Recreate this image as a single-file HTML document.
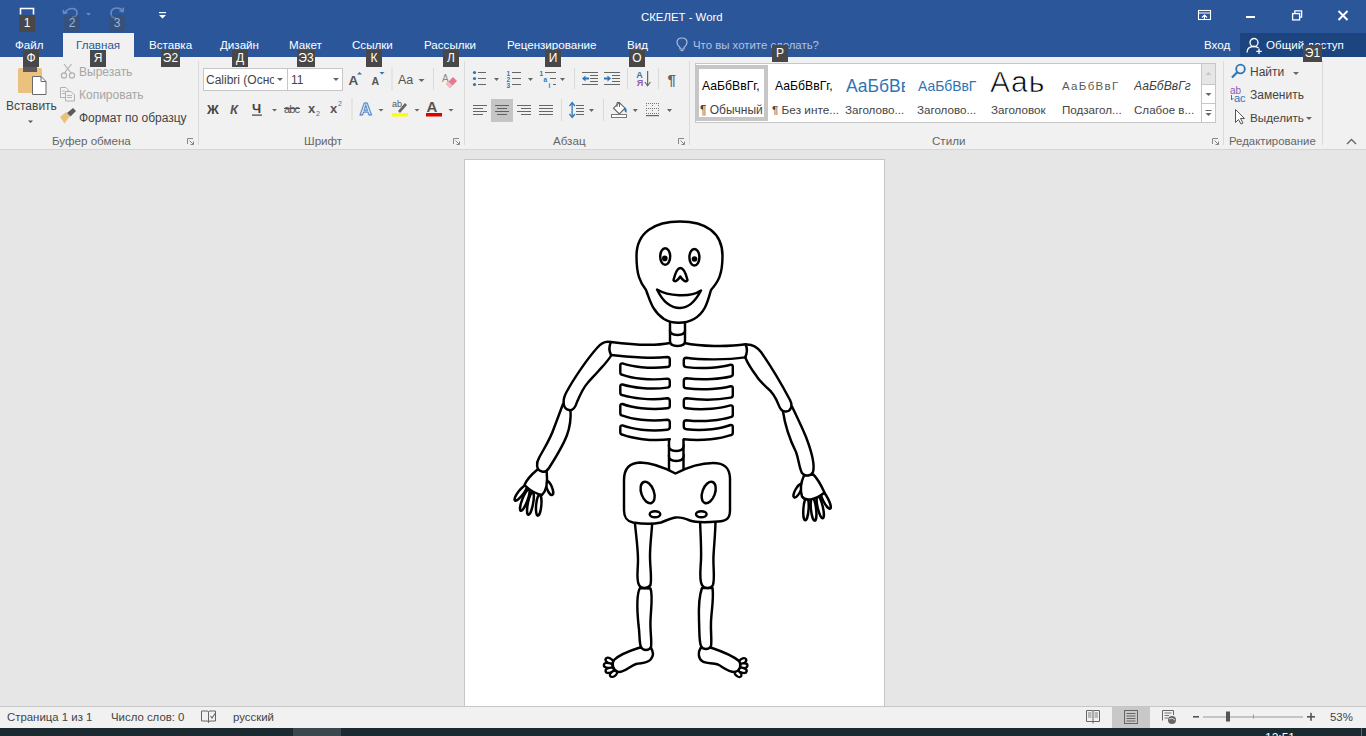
<!DOCTYPE html>
<html><head><meta charset="utf-8">
<style>
*{margin:0;padding:0;box-sizing:border-box}
html,body{width:1366px;height:736px;overflow:hidden}
body{position:relative;font-family:"Liberation Sans",sans-serif;background:#e6e6e6;color:#444}
.a{position:absolute;white-space:nowrap}
svg.a{overflow:visible}
.kt{position:absolute;background:#484848;color:#fff;font-size:12px;height:17px;line-height:17px;text-align:center}
.tab{position:absolute;top:38px;color:#fff;font-size:11.6px;line-height:14px}
.t{position:absolute;white-space:nowrap;font-size:12px;line-height:14px;color:#444}
.sep{position:absolute;width:1px;background:#dadada}
.gl{position:absolute;top:134px;font-size:11.6px;line-height:14px;color:#666;white-space:nowrap}
.dd{position:absolute;width:0;height:0;border-left:3px solid transparent;border-right:3px solid transparent;border-top:3px solid #666}
</style></head><body>
<!-- ===== title bar ===== -->
<div class="a" style="left:0;top:0;width:1366px;height:57px;background:#2b579a"></div>
<div class="t" style="left:641px;top:10px;color:#fff;font-size:11.4px">СКЕЛЕТ - Word</div>
<!--QAT-->
<svg class="a" style="left:0;top:0" width="200" height="32">
 <path d="M20.5 14.5 V8.5 H33.5 V14.5" fill="none" stroke="#fff" stroke-width="1.6"/>
 <path d="M64 13 Q68 8.5 72 8.5 Q77 8.5 77 13 Q77 17 72 17" fill="none" stroke="#6a8bbf" stroke-width="1.6"/>
 <path d="M63 10 L64 13.5 L67.5 12.5" fill="none" stroke="#6a8bbf" stroke-width="1.6"/>
 <path d="M86 13 H91 L88.5 15.5 Z" fill="#6a8bbf"/>
 <path d="M123 11 Q121 8 117 8 Q111 8 111 13.5 Q111 18 116 18" fill="none" stroke="#6a8bbf" stroke-width="1.6"/>
 <path d="M123.5 7.5 L123 11.5 L119.5 11" fill="none" stroke="#6a8bbf" stroke-width="1.6"/>
 <rect x="159" y="12" width="7" height="1.2" fill="#fff"/>
 <path d="M159 15 H166 L162.5 18.5 Z" fill="#fff"/>
</svg>
<div class="kt" style="left:19px;top:15px;width:16px">1</div>
<div class="kt" style="left:64px;top:15px;width:16px;background:rgba(72,72,72,.35);color:#9fb3d3">2</div>
<div class="kt" style="left:109px;top:15px;width:16px;background:rgba(72,72,72,.35);color:#9fb3d3">3</div>
<!-- window controls -->
<svg class="a" style="left:0;top:0" width="1366" height="32">
 <rect x="1198.5" y="10.5" width="12" height="9" fill="none" stroke="#fff" stroke-width="1.1"/>
 <rect x="1198" y="12.5" width="13" height="1" fill="#fff"/>
 <path d="M1202 17.5 L1204.5 15 L1207 17.5 M1204.5 15 V19.5" fill="none" stroke="#fff" stroke-width="1.1"/>
 <rect x="1246" y="16" width="9" height="2" fill="#fff"/>
 <rect x="1292.6" y="13.6" width="7" height="6.3" fill="none" stroke="#fff" stroke-width="1.3"/>
 <path d="M1294.8 13.6 V10.8 H1301.6 V17.2 H1299.6" fill="none" stroke="#fff" stroke-width="1.3"/>
 <path d="M1338.5 11 L1347.5 20 M1347.5 11 L1338.5 20" stroke="#fff" stroke-width="2"/>
</svg>
<!-- tabs -->
<div class="a" style="left:63px;top:33px;width:71px;height:24px;background:#f1f1f1"></div>
<div class="tab" style="left:15px">Файл</div>
<div class="tab" style="left:76px;color:#2b579a">Главная</div>
<div class="tab" style="left:149px">Вставка</div>
<div class="tab" style="left:220px">Дизайн</div>
<div class="tab" style="left:289px">Макет</div>
<div class="tab" style="left:352px">Ссылки</div>
<div class="tab" style="left:424px">Рассылки</div>
<div class="tab" style="left:507px">Рецензирование</div>
<div class="tab" style="left:627px">Вид</div>
<svg class="a" style="left:676px;top:37px" width="14" height="16">
 <path d="M4 10.5 Q1 8 1 5.5 Q1 1 6 1 Q11 1 11 5.5 Q11 8 8 10.5 V12 H4 Z" fill="none" stroke="#aebfdc" stroke-width="1.2"/>
 <path d="M4.5 13.5 H7.5" stroke="#aebfdc" stroke-width="1.2"/>
</svg>
<div class="tab" style="left:693px;color:#b4c3de;font-size:11.4px">Что вы хотите сделать?</div>
<div class="tab" style="left:1204px">Вход</div>
<div class="a" style="left:1240px;top:33px;width:126px;height:24px;background:#1c4580"></div>
<svg class="a" style="left:1246px;top:37px" width="18" height="18">
 <circle cx="8" cy="5.5" r="4" fill="none" stroke="#fff" stroke-width="1.3"/>
 <path d="M1 15.5 Q1 9.5 8 9.5 Q11 9.5 12.5 11" fill="none" stroke="#fff" stroke-width="1.3"/>
 <path d="M13 11.5 V17 M10.3 14.3 H15.7" stroke="#fff" stroke-width="1.3"/>
</svg>
<div class="tab" style="left:1266px">Общий доступ</div>
<!-- ===== ribbon ===== -->
<div class="a" style="left:0;top:57px;width:1366px;height:93px;background:#f1f1f1;border-bottom:1px solid #d5d5d5"></div>
<!-- clipboard group -->
<svg class="a" style="left:0;top:57px" width="200" height="92">
 <rect x="18" y="11" width="24" height="25" rx="1.5" fill="#eac27e"/>
 <rect x="23" y="10" width="14" height="5" fill="#5a5a5a"/>
 <path d="M32.5 19.5 H41 L46 24.5 V37.5 H32.5 Z" fill="#fff" stroke="#6a6a6a" stroke-width="1"/>
 <path d="M41 19.5 V24.5 H46" fill="none" stroke="#6a6a6a" stroke-width="1"/>
 <path d="M28 63.5 H33 L30.5 66 Z" fill="#555"/>
 <!-- scissors -->
 <path d="M64 7 L71.5 16.5 M71.5 7 L64 16.5" stroke="#b0b0b0" stroke-width="1.2"/>
 <circle cx="64" cy="18.5" r="2.6" fill="none" stroke="#b0b0b0" stroke-width="1.2"/>
 <circle cx="72" cy="18.5" r="2.6" fill="none" stroke="#b0b0b0" stroke-width="1.2"/>
 <!-- copy -->
 <path d="M60.5 30.5 H66 L68 32.5 V40.5 H60.5 Z" fill="none" stroke="#b0b0b0" stroke-width="1"/>
 <path d="M65.5 34.5 H71 L74.5 38 V44 H65.5 Z" fill="#f1f1f1" stroke="#b0b0b0" stroke-width="1"/>
 <path d="M62 34 H65 M62 36.5 H65 M67 38.5 H72 M67 40.5 H72" stroke="#b0b0b0" stroke-width="0.9"/>
 <!-- format painter -->
 <path d="M60 60 L66 55 L70 59 L64.5 66.5 Z" fill="#eac27e"/>
 <path d="M67 56 L73 51 L76 54 L70.5 59.5 Z" fill="#5a5a5a"/>
 <!-- launcher -->
 <path d="M187.5 87 V81.5 H193" fill="none" stroke="#888" stroke-width="1"/>
 <path d="M189.5 83.5 L193.5 87.5 M193.5 84.5 V87.5 H190.5" fill="none" stroke="#888" stroke-width="1"/>
</svg>
<div class="t" style="left:6px;top:99px;font-size:12px">Вставить</div>
<div class="t" style="left:79px;top:65px;color:#a6a6a6">Вырезать</div>
<div class="t" style="left:79px;top:88px;color:#a6a6a6">Копировать</div>
<div class="t" style="left:79px;top:111px">Формат по образцу</div>
<div class="gl" style="left:52px">Буфер обмена</div>
<div class="sep" style="left:198px;top:61px;height:84px"></div>

<!-- font group -->
<div class="a" style="left:203px;top:68px;width:85px;height:23px;background:#fff;border:1px solid #c6c6c6"></div>
<div class="a" style="left:287px;top:68px;width:56px;height:23px;background:#fff;border:1px solid #c6c6c6"></div>
<div class="t" style="left:206px;top:73px;width:68px;overflow:hidden;font-size:12px">Calibri (Основной текст)</div>
<div class="t" style="left:291px;top:73px">11</div>
<div class="dd" style="left:277px;top:78px"></div>
<div class="dd" style="left:333px;top:78px"></div>
<svg class="a" style="left:199px;top:57px" width="270" height="92">
 <!-- grow/shrink -->
 <text x="149.5" y="28" font-family="Liberation Sans" font-size="13.5" font-weight="bold" fill="#555">A</text>
 <path d="M158 17.5 L160.5 15 L163 17.5 Z" fill="#2e75b6"/>
 <text x="172.5" y="28" font-family="Liberation Sans" font-size="10.5" font-weight="bold" fill="#555">A</text>
 <path d="M180.5 15 H185.5 L183 17.5 Z" fill="#2e75b6"/>
 <rect x="192.5" y="11" width="1" height="22" fill="#dadada"/>
 <text x="199" y="27" font-family="Liberation Sans" font-size="12.5" fill="#555">Aa</text>
 <path d="M219.5 22 H225.5 L222.5 25 Z" fill="#666"/>
 <rect x="234" y="11" width="1" height="22" fill="#dadada"/>
 <!-- clear formatting -->
 <text x="243" y="25" font-family="Liberation Sans" font-size="10" fill="#888">A</text>
 <path d="M247 27 L254 20 L258 24 L251 31 Z" fill="#e8788a"/>
 <path d="M247 27 L249.5 24.5 L253.5 28.5 L251 31 Z" fill="#f4b9c2"/>
 <g transform="translate(0,-1)"><!-- row2 -->
 <text x="8" y="58" font-family="Liberation Sans" font-size="13" font-weight="bold" fill="#444">Ж</text>
 <text x="31" y="58" font-family="Liberation Sans" font-size="13" font-style="italic" font-weight="bold" fill="#555">К</text>
 <text x="53" y="57" font-family="Liberation Sans" font-size="13" font-weight="bold" fill="#444">Ч</text>
 <rect x="53" y="58.5" width="10" height="1.2" fill="#444"/>
 <path d="M73 53 H78 L75.5 55.5 Z" fill="#666"/>
 <text x="85" y="57" font-family="Liberation Sans" font-size="11" fill="#555" textLength="16">abc</text>
 <rect x="85" y="52" width="16" height="1" fill="#555"/>
 <text x="109" y="57" font-family="Liberation Sans" font-size="13" font-weight="bold" fill="#555">x</text>
 <text x="117" y="60" font-family="Liberation Sans" font-size="7" fill="#2e75b6">2</text>
 <text x="131" y="57" font-family="Liberation Sans" font-size="13" font-weight="bold" fill="#555">x</text>
 <text x="139" y="50" font-family="Liberation Sans" font-size="7" fill="#2e75b6">2</text>
 <rect x="152.5" y="42" width="1" height="22" fill="#dadada"/>
 <text x="160.5" y="59" font-family="Liberation Sans" font-size="17" font-weight="bold" fill="#fff" stroke="#3f7fc0" stroke-width="1">A</text>
 <path d="M179.5 53 H184.5 L182 55.5 Z" fill="#666"/>
 <text x="193" y="51" font-family="Liberation Sans" font-size="9" fill="#555">ab</text>
 <path d="M199 55 L206 47 L208 49 L201 57 Z" fill="#666"/>
 <rect x="193" y="57" width="16" height="3.5" fill="#ffff00"/>
 <path d="M215.5 53 H220.5 L218 55.5 Z" fill="#666"/>
 <text x="227.5" y="56" font-family="Liberation Sans" font-size="15" font-weight="bold" fill="#555">A</text>
 <rect x="227" y="57" width="16" height="3.5" fill="#e00000"/>
 <path d="M249.5 53 H254.5 L252 55.5 Z" fill="#666"/>
 </g>
 <!-- launcher -->
 <path d="M254.5 87 V81.5 H260" fill="none" stroke="#888" stroke-width="1"/>
 <path d="M256.5 83.5 L260.5 87.5 M260.5 84.5 V87.5 H257.5" fill="none" stroke="#888" stroke-width="1"/>
</svg>
<div class="gl" style="left:304px">Шрифт</div>
<div class="sep" style="left:464px;top:61px;height:84px"></div>

<!-- paragraph group -->
<svg class="a" style="left:0;top:0" width="700" height="150">
 <g fill="#2e75b6"><circle cx="474.5" cy="72.5" r="1.6"/><circle cx="474.5" cy="78.5" r="1.6"/><circle cx="474.5" cy="84.5" r="1.6"/></g>
 <g fill="#666">
  <rect x="478" y="72" width="8" height="1"/><rect x="478" y="78" width="8" height="1"/><rect x="478" y="84" width="8" height="1"/>
  <path d="M494 78 H499 L496.5 81 Z"/>
  <rect x="512" y="72" width="9" height="1"/><rect x="512" y="78" width="9" height="1"/><rect x="512" y="84" width="9" height="1"/>
  <path d="M528 78 H533 L530.5 81 Z"/>
  <rect x="545" y="72" width="11" height="1"/><rect x="550" y="78" width="6" height="1"/><rect x="553" y="84" width="3" height="1"/>
  <path d="M560 78 H565 L562.5 81 Z"/>
 </g>
 <g font-family="Liberation Sans" font-size="6.5" font-weight="bold" fill="#2e75b6"><text x="506.5" y="75.5">1</text><text x="506.5" y="81.5">2</text><text x="506.5" y="87.5">3</text><text x="539.5" y="75.5">1</text><text x="543.5" y="81.5">a</text><text x="548.5" y="87.5">i</text></g>
 <rect x="574" y="68" width="1" height="21" fill="#dadada"/>
 <g fill="#666">
  <rect x="582" y="72" width="16" height="1"/><rect x="590" y="75" width="8" height="1"/><rect x="590" y="78" width="8" height="1"/><rect x="590" y="81" width="8" height="1"/><rect x="582" y="84" width="16" height="1"/>
  <rect x="604" y="72" width="16" height="1"/><rect x="612" y="75" width="8" height="1"/><rect x="612" y="78" width="8" height="1"/><rect x="612" y="81" width="8" height="1"/><rect x="604" y="84" width="16" height="1"/>
 </g>
 <path d="M582 78.5 L585.5 75.5 V81.5 Z" fill="#2e75b6"/><rect x="585" y="77.5" width="4" height="2" fill="#2e75b6"/>
 <path d="M611 78.5 L607.5 75.5 V81.5 Z" fill="#2e75b6"/><rect x="604" y="77.5" width="4" height="2" fill="#2e75b6"/>
 <rect x="627" y="68" width="1" height="21" fill="#dadada"/>
 <text x="636.3" y="77.8" font-family="Liberation Sans" font-size="9" font-weight="bold" fill="#2e75b6">A</text>
 <text x="636.8" y="86" font-family="Liberation Sans" font-size="9" font-weight="bold" fill="#8f5ab3">Я</text>
 <rect x="647" y="71" width="1.2" height="14" fill="#666"/>
 <path d="M644.8 82 L647.6 85.8 L650.4 82" fill="none" stroke="#666" stroke-width="1.1"/>
 <rect x="658" y="68" width="1" height="21" fill="#dadada"/>
 <text x="667.5" y="85" font-family="Liberation Sans" font-size="15" font-weight="bold" fill="#666">¶</text>
 <!-- row2 -->
 <g fill="#666">
  <rect x="473" y="105" width="14" height="1"/><rect x="473" y="108" width="10" height="1"/><rect x="473" y="111" width="14" height="1"/><rect x="473" y="114" width="10" height="1"/>
 </g>
 <rect x="491" y="99" width="22" height="23" fill="#c5c5c5"/>
 <g fill="#606060">
  <rect x="495" y="105" width="14" height="1"/><rect x="497" y="108" width="10" height="1"/><rect x="495" y="111" width="14" height="1"/><rect x="497" y="114" width="10" height="1"/>
 </g>
 <g fill="#666">
  <rect x="517" y="105" width="14" height="1"/><rect x="521" y="108" width="10" height="1"/><rect x="517" y="111" width="14" height="1"/><rect x="521" y="114" width="10" height="1"/>
  <rect x="539" y="105" width="14" height="1"/><rect x="539" y="108" width="14" height="1"/><rect x="539" y="111" width="14" height="1"/><rect x="539" y="114" width="14" height="1"/>
 </g>
 <rect x="561" y="99" width="1" height="22" fill="#dadada"/>
 <rect x="571.5" y="104" width="1.3" height="12" fill="#2e75b6"/>
 <path d="M569.5 106 L572.2 102.5 L574.9 106 M569.5 114 L572.2 117.5 L574.9 114" fill="none" stroke="#2e75b6" stroke-width="1.3"/>
 <g fill="#666"><rect x="576" y="105" width="8" height="1"/><rect x="576" y="108" width="8" height="1"/><rect x="576" y="111" width="8" height="1"/><rect x="576" y="114" width="8" height="1"/>
  <path d="M589 109 H594 L591.5 112 Z"/></g>
 <rect x="603" y="99" width="1" height="22" fill="#dadada"/>
 <path d="M613.5 108.2 L619.3 102.5 L625 108.2 L619.3 114 Z" fill="#fff" stroke="#666" stroke-width="1.1"/>
 <path d="M617 107 V102.5 H619.5 V107" fill="none" stroke="#666" stroke-width="1"/>
 <path d="M624 107 Q627.5 108 626.5 113 L624.5 111 Z" fill="#2e75b6"/>
 <rect x="611.5" y="114.5" width="15" height="3" fill="#fff" stroke="#777" stroke-width="1"/>
 <path d="M632.8 109 H637.8 L635.3 112 Z" fill="#666"/>
 <g fill="#777">
  <rect x="646" y="103" width="1" height="1"/><rect x="648" y="103" width="1" height="1"/><rect x="650" y="103" width="1" height="1"/><rect x="652" y="103" width="1" height="1"/><rect x="654" y="103" width="1" height="1"/><rect x="656" y="103" width="1" height="1"/><rect x="658" y="103" width="1" height="1"/>
  <rect x="646" y="108" width="1" height="1"/><rect x="648" y="108" width="1" height="1"/><rect x="650" y="108" width="1" height="1"/><rect x="652" y="108" width="1" height="1"/><rect x="654" y="108" width="1" height="1"/><rect x="656" y="108" width="1" height="1"/><rect x="658" y="108" width="1" height="1"/>
  <rect x="646" y="113" width="1" height="1"/><rect x="652" y="113" width="1" height="1"/><rect x="658" y="113" width="1" height="1"/>
  <rect x="646" y="105" width="1" height="1"/><rect x="646" y="110" width="1" height="1"/><rect x="652" y="105" width="1" height="1"/><rect x="652" y="110" width="1" height="1"/><rect x="658" y="105" width="1" height="1"/><rect x="658" y="110" width="1" height="1"/>
  <rect x="648" y="113" width="1" height="1"/><rect x="650" y="113" width="1" height="1"/><rect x="654" y="113" width="1" height="1"/><rect x="656" y="113" width="1" height="1"/>
 </g>
 <rect x="646" y="115" width="13" height="1.2" fill="#666"/>
 <path d="M667 109 H672 L669.5 112 Z" fill="#666"/>
 <!-- launcher -->
 <path d="M678.5 144 V138.5 H684" fill="none" stroke="#888" stroke-width="1"/>
 <path d="M680.5 140.5 L684.5 144.5 M684.5 141.5 V144.5 H681.5" fill="none" stroke="#888" stroke-width="1"/>
</svg>
<div class="gl" style="left:553px">Абзац</div>
<div class="sep" style="left:689px;top:61px;height:84px"></div>

<!-- styles group -->
<div class="a" style="left:695px;top:63px;width:521px;height:60px;background:#fff;border:1px solid #c6c6c6"></div>
<div class="a" style="left:695px;top:65px;width:73px;height:56px;border:4px solid #c6c6c6;background:#fff"></div>
<div class="t" style="left:702px;top:79px;color:#000;font-size:12.2px">АаБбВвГг,</div>
<div class="t" style="left:700px;top:103px;color:#444;font-size:12px">¶ Обычный</div>
<div class="t" style="left:775px;top:79px;color:#000;font-size:12.2px">АаБбВвГг,</div>
<div class="t" style="left:772px;top:103px;color:#444;font-size:11.8px">¶ Без инте...</div>
<div class="t" style="left:846px;top:76px;width:59px;overflow:hidden;color:#2e74b5;font-size:17.5px;line-height:20px">АаБбВв</div>
<div class="t" style="left:845px;top:103px;color:#444;font-size:11.6px">Заголово...</div>
<div class="t" style="left:918px;top:78px;color:#2e74b5;font-size:13.9px;line-height:16px">АаБбВвГ</div>
<div class="t" style="left:917px;top:103px;color:#444;font-size:11.6px">Заголово...</div>
<svg class="a" style="left:985px;top:62px" width="70" height="36"><text x="5" y="29.5" font-family="Liberation Sans" font-size="30" letter-spacing="1" fill="#000" stroke="#fff" stroke-width="0.7">Aaь</text></svg>
<div class="t" style="left:991px;top:103px;color:#444;font-size:11.6px">Заголовок</div>
<div class="t" style="left:1062px;top:79px;color:#5a5a5a;font-size:11.5px;letter-spacing:1.3px">АаБбВвГ</div>
<div class="t" style="left:1062px;top:103px;color:#444;font-size:11.6px">Подзагол...</div>
<div class="t" style="left:1134px;top:79px;width:60px;overflow:hidden;color:#404040;font-size:12.2px;font-style:italic">АаБбВвГг</div>
<div class="t" style="left:1134px;top:103px;color:#444;font-size:11.6px">Слабое в...</div>
<div class="a" style="left:1201px;top:63px;width:15px;height:60px;background:#fff;border:1px solid #c6c6c6"></div>
<div class="a" style="left:1202px;top:64px;width:13px;height:21px;background:#e6e6e6"></div>
<div class="a" style="left:1201px;top:84px;width:15px;height:1px;background:#c6c6c6"></div>
<div class="a" style="left:1201px;top:103px;width:15px;height:1px;background:#c6c6c6"></div>
<svg class="a" style="left:1201px;top:63px" width="15" height="60">
 <path d="M4.5 12 H10.5 L7.5 9 Z" fill="#c6c6c6"/>
 <path d="M4.5 30 H10.5 L7.5 33 Z" fill="#666"/>
 <path d="M4.5 47.5 H10.5" stroke="#666" stroke-width="1"/>
 <path d="M4.5 50 H10.5 L7.5 53 Z" fill="#666"/>
</svg>
<div class="gl" style="left:932px">Стили</div>
<svg class="a" style="left:1205px;top:57px" width="20" height="92">
 <path d="M7.5 87 V81.5 H13" fill="none" stroke="#888" stroke-width="1"/>
 <path d="M9.5 83.5 L13.5 87.5 M13.5 84.5 V87.5 H10.5" fill="none" stroke="#888" stroke-width="1"/>
</svg>
<div class="sep" style="left:1223px;top:61px;height:84px"></div>

<!-- editing group -->
<svg class="a" style="left:1225px;top:57px" width="141" height="92">
 <circle cx="15.5" cy="12" r="4.3" fill="none" stroke="#2e75b6" stroke-width="1.8"/>
 <path d="M12.5 15 L7 20.5" stroke="#2e75b6" stroke-width="2.2"/>
 <path d="M68 15 H74 L71 18 Z" fill="#666"/>
 <text x="5" y="37" font-family="Liberation Sans" font-size="10" fill="#8f5ab3">ab</text>
 <text x="9" y="45" font-family="Liberation Sans" font-size="11" fill="#2e75b6">ac</text>
 <path d="M6.5 38 V43 L8.5 41" fill="none" stroke="#2e75b6" stroke-width="1"/>
 <path d="M10.5 52.5 V65.5 L13.5 62.5 L16 67 L18 66 L15.5 61.5 L19.5 61.5 Z" fill="#fff" stroke="#555" stroke-width="1"/>
 <path d="M81 60 H87 L84 63 Z" fill="#666"/>
 <path d="M122 87 L126.5 82.5 L131 87" fill="none" stroke="#666" stroke-width="1.4"/>
</svg>
<div class="t" style="left:1250px;top:65px">Найти</div>
<div class="t" style="left:1250px;top:88px">Заменить</div>
<div class="t" style="left:1250px;top:111px;font-size:11.7px">Выделить</div>
<div class="gl" style="left:1229px;font-size:11.4px">Редактирование</div>
<div class="sep" style="left:1322px;top:61px;height:84px"></div>

<!-- tab keytips -->
<div class="kt" style="left:23px;top:50px;width:16px">Ф</div>
<div class="kt" style="left:90px;top:50px;width:16px">Я</div>
<div class="kt" style="left:161px;top:50px;width:19px">Э2</div>
<div class="kt" style="left:232px;top:50px;width:16px">Д</div>
<div class="kt" style="left:297px;top:50px;width:18px">Э3</div>
<div class="kt" style="left:366px;top:50px;width:16px">К</div>
<div class="kt" style="left:443px;top:50px;width:16px">Л</div>
<div class="kt" style="left:545px;top:50px;width:16px">И</div>
<div class="kt" style="left:629px;top:50px;width:16px">О</div>
<div class="kt" style="left:772px;top:45px;width:16px">Р</div>
<div class="kt" style="left:1303px;top:45px;width:19px">Э1</div>
<!-- ===== document ===== -->
<div class="a" style="left:464px;top:159px;width:421px;height:560px;background:#fff;border:1px solid #c6c6c6"></div>
<svg class="a" style="left:0;top:0" width="1366" height="736" viewBox="0 0 1366 736"><g stroke="#000" stroke-width="2.45" stroke-linejoin="round" stroke-linecap="round"><ellipse cx="520.78" cy="492.95" rx="2.6" ry="9.5" transform="rotate(38 520.78 492.95)" fill="#fff"/><ellipse cx="524.81" cy="500.1" rx="2.6" ry="11.5" transform="rotate(21 524.81 500.1)" fill="#fff"/><ellipse cx="530.45" cy="503.59" rx="2.6" ry="11.5" transform="rotate(11 530.45 503.59)" fill="#fff"/><ellipse cx="538.73" cy="505.2" rx="2.6" ry="10.5" transform="rotate(5 538.73 505.2)" fill="#fff"/><ellipse cx="549.48" cy="487.99" rx="2.6" ry="7.5" transform="rotate(-22 549.48 487.99)" fill="#fff"/><path d="M 537.5 469.5 C 532 474 527 479 524.5 485 C 529 489.5 535 493.5 542 495 C 546 491 548 484 546.7 471.8 Z" fill="#fff"/><path d="M 563 404 C 560 412 557 420 554 428 C 550 440 543 450 539 458 C 536 463 536 470 542 471.5 C 545 472.5 547 471 549 468 C 556 457 563 446 567 435 C 570 427 571 417 570.5 409.5 Z" fill="#fff"/><path d="M 610.5 342 C 606 341 601 343 597 348 C 588 358 574 378 566 393 C 562 401 563 409 569 410 C 573 411 575.5 407 577 402 C 580 395 583 388 587.6 383 C 591 379 595 375 598.5 371 C 603 366 608 361 611.5 355 Z" fill="#fff"/><ellipse cx="806.0" cy="508.88" rx="2.6" ry="11.5" transform="rotate(4 806.0 508.88)" fill="#fff"/><ellipse cx="813.56" cy="509.32" rx="2.6" ry="11.5" transform="rotate(-6 813.56 509.32)" fill="#fff"/><ellipse cx="820.21" cy="507.08" rx="2.6" ry="11.5" transform="rotate(-13 820.21 507.08)" fill="#fff"/><ellipse cx="825.65" cy="499.79" rx="2.6" ry="10" transform="rotate(-27 825.65 499.79)" fill="#fff"/><ellipse cx="797.79" cy="490.76" rx="2.6" ry="7.5" transform="rotate(29 797.79 490.76)" fill="#fff"/><path d="M 804 475.5 C 801 482 800 490 802 496.5 C 805 501.5 815 500.5 824.5 492.5 C 821 485 817 478 813.3 474.5 Z" fill="#fff"/><path d="M 783 411.5 C 785 425 790 440 796 452 C 799 460 799 468 802 473 C 805 477 811 476 813 472 C 815 465 811 450 806 437 C 801 425 796 415 792 406.5 Z" fill="#fff"/><path d="M 746 344.5 C 752 344 757 347 761 352 C 770 365 782 385 790 400 C 793 406 791 411 786 411.5 C 782 412 780 409 778.5 404.6 C 775 396 771 391 767.6 388.3 C 763 384 759 380 756.7 376.3 C 752 370 748 364 745.5 358 Z" fill="#fff"/><ellipse cx="609.5" cy="660.8" rx="4.3" ry="2.5" transform="rotate(30 609.5 660.8)" fill="#fff" stroke-width="2.3"/><ellipse cx="608.3" cy="665.5" rx="4.5" ry="2.5" transform="rotate(8 608.3 665.5)" fill="#fff" stroke-width="2.3"/><ellipse cx="609.8" cy="670.3" rx="4.3" ry="2.5" transform="rotate(-12 609.8 670.3)" fill="#fff" stroke-width="2.3"/><ellipse cx="613.5" cy="673.8" rx="4.0" ry="2.5" transform="rotate(-35 613.5 673.8)" fill="#fff" stroke-width="2.3"/><path d="M 640 647.5 C 632 650 620 654 614 660 C 611 664 613 670 618 672 C 624 673 630 666 636 664 C 642 662.5 647 664 651 659 C 654 655 653 651 651 648 Z" fill="#fff"/><path d="M 640 588 C 636 595 637 610 638.5 625 C 640 635 639 643 641 647 C 643 651 649 651 651 647 C 652 640 650 632 650.5 620 C 651 608 653 595 650.5 588.5 Z" fill="#fff"/><path d="M 634.5 519 C 636 535 638 548 638 560 C 638 570 636 580 639 585 C 641 589 648 589 650.5 585 C 652 578 650 568 650 556 C 650 545 651.5 535 652.5 519 Z" fill="#fff"/><ellipse cx="742.3" cy="661.3" rx="4.3" ry="2.5" transform="rotate(-30 742.3 661.3)" fill="#fff" stroke-width="2.3"/><ellipse cx="743.0" cy="665.8" rx="4.5" ry="2.5" transform="rotate(-5 743.0 665.8)" fill="#fff" stroke-width="2.3"/><ellipse cx="742.5" cy="670.3" rx="4.3" ry="2.5" transform="rotate(15 742.5 670.3)" fill="#fff" stroke-width="2.3"/><ellipse cx="738.0" cy="673.8" rx="4.0" ry="2.5" transform="rotate(40 738.0 673.8)" fill="#fff" stroke-width="2.3"/><path d="M 710.6 647.5 C 718 650 732 655 739 661 C 742 665 740 671 734.5 672 C 728 672 723 667 718 664.5 C 712 662.5 706 664 702 661 C 698 658 698 652 700.6 648 Z" fill="#fff"/><path d="M 702 588 C 699 596 698.5 606 699 620 C 699.5 632 699 642 701 646 C 703 650 709 650 711 646 C 712 640 710.5 632 711 622 C 711.5 610 714 598 712.5 588 Z" fill="#fff"/><path d="M 700 519 C 700.5 535 701.5 548 701 560 C 700.5 570 699 580 702 585 C 704 589 711 589 713 585 C 715 578 713 568 713.5 556 C 714 545 715.5 533 715.5 519 Z" fill="#fff"/><path d="M 669 455 L 669 475 L 683.5 475 L 683.5 455" fill="#fff"/><path d="M 669 445 L 669 456 C 669 460 672 461 676.2 461 C 680.5 461 683.5 460 683.5 456 L 683.5 445" fill="#fff"/><path d="M 669 440 L 669 446 C 669 450 672 451 676.2 451 C 680.5 451 683.5 450 683.5 446 L 683.5 440" fill="#fff"/><path d="M 624 480 C 624 472 627 463 640 462.5 C 652 462.5 665 468 675.5 473.5 C 686 468 700 463 713 463 C 725 463 729.5 468 730 478 L 730 510 C 730 518 727 521 718 521.5 C 706 522.5 697 523 690 520.5 C 684 518 679 517 675.5 517.5 C 672 518 667 520 661 522.5 C 654 524 643 524 633 522.5 C 626 521 624 517 624 510 Z" fill="#fff"/><ellipse cx="647.6" cy="492.5" rx="6.3" ry="11.2" transform="rotate(-20 647.6 492.5)" fill="#fff"/><ellipse cx="708.7" cy="492.5" rx="6.3" ry="11.2" transform="rotate(20 708.7 492.5)" fill="#fff"/><ellipse cx="655" cy="514.2" rx="5.3" ry="3.0" transform="rotate(0 655 514.2)" fill="#fff"/><ellipse cx="701.3" cy="514.2" rx="5.3" ry="3.0" transform="rotate(0 701.3 514.2)" fill="#fff"/><path d="M 611 342 C 630 344.5 655 346 670 343 L 684.5 343 C 700 346.5 728 347 745.6 344.3 C 747.5 349 747 354 745 357.4 L 684 357.7 L 684 367 L 670 367 L 670 357 L 611 355 C 609 351 609 346 611 342 Z" fill="#fff" stroke="none"/><path d="M 611 355 C 609 351 609 346 611 342 C 630 344.5 655 346 670 343 L 684.5 343 C 700 346.5 728 347 745.6 344.3 C 747.5 349 747 354 745 357.4" fill="none"/><path d="M 670 330 L 670 341 C 670 345 673 346 677.5 346 C 682 346 685 345 685 341 L 685 330" fill="#fff"/><path d="M 670 318 L 670 330 C 670 334 673 335 677.5 335 C 682 335 685 334 685 330 L 685 318" fill="#fff"/><path d="M 611 355 C 630 357.5 655 358.5 667.1999999999999 357 Q 669.8 357 669.8 359.6 L 669.8 364.4 Q 669.8 367 667.1999999999999 367 C 649.32 369.20 631.44 366.50 622.50 363.40 Q 620.3 363.09999999999997 620.3 365.59999999999997 L 620.3 372.40000000000003 Q 620.3 374.6 622.5 374.8 C 631.44 378.00 649.32 380.80 667.20 378.60 Q 669.8 378.6 669.8 381.20000000000005 L 669.8 385.0 Q 669.8 387.6 667.1999999999999 387.6 C 649.32 389.80 631.44 387.35 622.50 384.50 Q 620.3 384.2 620.3 386.7 L 620.3 392.8 Q 620.3 395 622.5 395.2 C 631.44 398.05 649.32 400.50 667.20 398.30 Q 669.8 398.3 669.8 400.90000000000003 L 669.8 405.7 Q 669.8 408.3 667.1999999999999 408.3 C 649.32 410.50 631.44 407.45 622.50 404.00 Q 620.3 403.7 620.3 406.2 L 620.3 413.2 Q 620.3 415.4 622.5 415.59999999999997 C 631.44 418.95 649.32 421.90 667.20 419.70 Q 669.8 419.7 669.8 422.3 L 669.8 427.09999999999997 Q 669.8 429.7 667.1999999999999 429.7 C 649.32 431.90 631.44 428.85 622.50 425.40 Q 620.3 425.09999999999997 620.3 427.59999999999997 L 620.3 432.3 Q 620.3 434.5 622.5 434.7 C 631.96 438.30 650.88 441.50 669.80 439.30" fill="none"/><path d="M 745 357.4 C 728 360 700 360 686.4 357.7 Q 683.8 357.7 683.8 360.3 L 683.8 364.5 Q 683.8 367.1 686.4 367.1 C 704.08 369.30 721.76 367.25 730.60 364.80 Q 732.8 364.5 732.8 367.0 L 732.8 374.1 Q 732.8 376.3 730.5999999999999 376.5 C 721.76 378.70 704.08 380.50 686.40 378.30 Q 683.8 378.3 683.8 380.90000000000003 L 683.8 385.7 Q 683.8 388.3 686.4 388.3 C 704.08 390.50 721.76 388.55 730.60 386.20 Q 732.8 385.9 732.8 388.4 L 732.8 395.2 Q 732.8 397.4 730.5999999999999 397.59999999999997 C 721.76 399.25 704.08 400.50 686.40 398.30 Q 683.8 398.3 683.8 400.90000000000003 L 683.8 405.7 Q 683.8 408.3 686.4 408.3 C 704.08 410.50 721.76 408.15 730.60 405.40 Q 732.8 405.09999999999997 732.8 407.59999999999997 L 732.8 414.7 Q 732.8 416.9 730.5999999999999 417.09999999999997 C 721.76 419.95 704.08 422.40 686.40 420.20 Q 683.8 420.2 683.8 422.8 L 683.8 426.59999999999997 Q 683.8 429.2 686.4 429.2 C 704.08 431.40 721.76 428.40 730.60 425.00 Q 732.8 424.7 732.8 427.2 L 732.8 432.8 Q 732.8 435 730.5999999999999 435.2 C 721.24 438.55 702.52 441.50 683.80 439.30" fill="none"/><path d="M 680 221.5 C 705 221.5 722.5 232 722.5 256 C 722.5 275 718 282 711 290 C 708 300 706 312 694 319 C 685 324 672 324 664 319 C 652 311 650 300 646 290 C 640 282 636.5 275 636.5 256 C 636.5 232 655 221.5 680 221.5 Z" fill="#fff"/><ellipse cx="665.2" cy="256.5" rx="5" ry="8.3" transform="rotate(0 665.2 256.5)" fill="#fff"/><ellipse cx="694.4" cy="257.2" rx="5" ry="8.3" transform="rotate(0 694.4 257.2)" fill="#fff"/><circle cx="664.8" cy="258.4" r="2.8" fill="#000" stroke="none"/><circle cx="694.5" cy="259" r="2.8" fill="#000" stroke="none"/><path d="M 673.5 280 C 675 274 677 268 680.3 268 C 683.5 268 686 274 687.5 280 C 686 282.5 683 281 680.3 276.5 C 677.5 281 674.5 282.5 673.5 280 Z" fill="#fff"/><path d="M 657 289.5 C 668 296 690 298 701 290.5 C 695 302 688 308 680 308 C 670 308 662 300 657 289.5 Z" fill="#fff"/></g></svg>
<!-- ===== status bar ===== -->
<div class="a" style="left:0;top:706px;width:1366px;height:22px;background:#f1f1f1;border-top:1px solid #c6c6c6"></div>
<div class="t" style="left:7px;top:710px;font-size:11.4px">Страница 1 из 1</div>
<div class="t" style="left:111px;top:710px;font-size:11.4px">Число слов: 0</div>
<svg class="a" style="left:200px;top:708px" width="20" height="18">
 <path d="M1.5 3 H7 Q8.5 3 8.5 4.5 V14.5 Q8.5 13 7 13 H1.5 Z M8.5 4.5 Q8.5 3 10 3 H15.5 V13 H10 Q8.5 13 8.5 14.5" fill="none" stroke="#666" stroke-width="1"/>
 <path d="M10.5 8 L12 10 L15.5 5" fill="none" stroke="#666" stroke-width="1.1"/>
</svg>
<div class="t" style="left:233px;top:710px;font-size:11.4px">русский</div>
<div class="a" style="left:1112px;top:707px;width:38px;height:21px;background:#c8c8c8"></div>
<svg class="a" style="left:1080px;top:706px" width="286" height="22">
 <path d="M6.5 4.5 H12.5 Q13 4.5 13 5.5 V15.5 H6.5 Z M13 5.5 Q13 4.5 14 4.5 H19.5 V15.5 H13" fill="none" stroke="#666" stroke-width="1"/>
 <path d="M8 7 H11.5 M8 9 H11.5 M8 11 H11.5 M14.5 7 H18 M14.5 9 H18 M14.5 11 H18" stroke="#666" stroke-width="0.8"/>
 <path d="M13 15.5 V17.5" stroke="#666" stroke-width="1"/>
 <rect x="44.5" y="4.5" width="13" height="13" fill="none" stroke="#666" stroke-width="1"/>
 <path d="M46.5 7.5 H55.5 M46.5 10 H55.5 M46.5 12.5 H55.5 M46.5 15 H55.5" stroke="#666" stroke-width="1"/>
 <path d="M82.5 14.5 V4.5 H93.5 V9" fill="none" stroke="#666" stroke-width="1"/>
 <path d="M84.5 7 H91.5 M84.5 9.5 H89 M84.5 12 H88" stroke="#666" stroke-width="0.9"/>
 <circle cx="92" cy="14" r="4" fill="#666"/>
 <path d="M89 13 Q92 11 95 14" fill="none" stroke="#f1f1f1" stroke-width="0.8"/>
 <rect x="113" y="10" width="6" height="1.6" fill="#555"/>
 <rect x="123" y="10.5" width="100" height="1" fill="#999"/>
 <rect x="146" y="5.5" width="4" height="10" fill="#555"/>
 <rect x="173" y="8.5" width="1" height="4" fill="#999"/>
 <rect x="227" y="10" width="8" height="1.6" fill="#555"/>
 <rect x="230.2" y="6.8" width="1.6" height="8" fill="#555"/>
</svg>
<div class="t" style="left:1330px;top:710px;font-size:11.4px">53%</div>

<!-- taskbar -->
<div class="a" style="left:0;top:728px;width:1366px;height:8px;background:#1b2a31"></div>
<div class="a" style="left:293px;top:728px;width:48px;height:8px;background:#3a474d"></div>
<div class="a" style="left:1265px;top:729px;height:7px;overflow:hidden;width:30px"><div class="t" style="left:0;top:2px;color:#fff;font-size:12px">12:51</div></div>
<div class="a" style="left:1361px;top:728px;width:1px;height:8px;background:#5d6a70"></div>

</body></html>
